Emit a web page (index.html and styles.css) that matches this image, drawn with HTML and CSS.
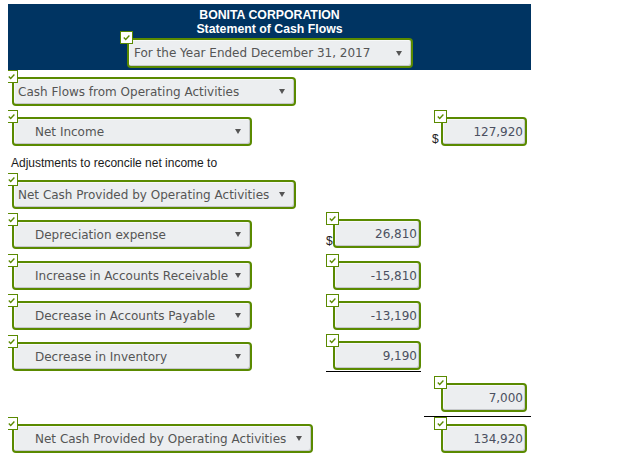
FILE: index.html
```html
<!DOCTYPE html>
<html>
<head>
<meta charset="utf-8">
<link rel="stylesheet" href="styles.css">
</head>
<body>
<div class="header">
  <div class="title">BONITA CORPORATION</div>
  <div class="title">Statement of Cash Flows</div>
  <div class="header-select">
    <div class="field sel sel-year">
      <span class="badge"><svg viewBox="0 0 11 11" width="11" height="11"><path d="M2.8 5.6 L4.7 7.4 L8.4 3.6" fill="none" stroke="#5a8a00" stroke-width="1.4"/></svg></span>
      <span class="sel-text">For the Year Ended December 31, 2017</span>
      <svg class="arrow" viewBox="0 0 6 5" width="6" height="5"><polygon points="0,0 6,0 3,5" fill="#555"/></svg>
    </div>
  </div>
</div>

<div class="sheet">
  <div class="row r1">
    <div class="c0">
      <div class="field sel w284">
        <span class="badge"><svg viewBox="0 0 11 11" width="11" height="11"><path d="M2.8 5.6 L4.7 7.4 L8.4 3.6" fill="none" stroke="#5a8a00" stroke-width="1.4"/></svg></span>
        <span class="sel-text">Cash Flows from Operating Activities</span>
        <svg class="arrow" viewBox="0 0 6 5" width="6" height="5"><polygon points="0,0 6,0 3,5" fill="#555"/></svg>
      </div>
    </div>
  </div>

  <div class="row r2">
    <div class="c0">
      <div class="field sel w240 indent">
        <span class="badge"><svg viewBox="0 0 11 11" width="11" height="11"><path d="M2.8 5.6 L4.7 7.4 L8.4 3.6" fill="none" stroke="#5a8a00" stroke-width="1.4"/></svg></span>
        <span class="sel-text">Net Income</span>
        <svg class="arrow" viewBox="0 0 6 5" width="6" height="5"><polygon points="0,0 6,0 3,5" fill="#555"/></svg>
      </div>
    </div>
    <div class="c1"></div>
    <div class="c2">
      <span class="dollar">$</span>
      <div class="field num w86">
        <span class="badge"><svg viewBox="0 0 11 11" width="11" height="11"><path d="M2.8 5.6 L4.7 7.4 L8.4 3.6" fill="none" stroke="#5a8a00" stroke-width="1.4"/></svg></span>
        127,920
      </div>
    </div>
  </div>

  <div class="label">Adjustments to reconcile net income to</div>

  <div class="row r3">
    <div class="c0">
      <div class="field sel w284">
        <span class="badge"><svg viewBox="0 0 11 11" width="11" height="11"><path d="M2.8 5.6 L4.7 7.4 L8.4 3.6" fill="none" stroke="#5a8a00" stroke-width="1.4"/></svg></span>
        <span class="sel-text">Net Cash Provided by Operating Activities</span>
        <svg class="arrow" viewBox="0 0 6 5" width="6" height="5"><polygon points="0,0 6,0 3,5" fill="#555"/></svg>
      </div>
    </div>
  </div>

  <div class="row r4">
    <div class="c0 shift">
      <div class="field sel w240 indent">
        <span class="badge"><svg viewBox="0 0 11 11" width="11" height="11"><path d="M2.8 5.6 L4.7 7.4 L8.4 3.6" fill="none" stroke="#5a8a00" stroke-width="1.4"/></svg></span>
        <span class="sel-text">Depreciation expense</span>
        <svg class="arrow" viewBox="0 0 6 5" width="6" height="5"><polygon points="0,0 6,0 3,5" fill="#555"/></svg>
      </div>
    </div>
    <div class="c1">
      <span class="dollar d1">$</span>
      <div class="field num w88">
        <span class="badge"><svg viewBox="0 0 11 11" width="11" height="11"><path d="M2.8 5.6 L4.7 7.4 L8.4 3.6" fill="none" stroke="#5a8a00" stroke-width="1.4"/></svg></span>
        26,810
      </div>
    </div>
  </div>

  <div class="row r5">
    <div class="c0">
      <div class="field sel w240 indent">
        <span class="badge"><svg viewBox="0 0 11 11" width="11" height="11"><path d="M2.8 5.6 L4.7 7.4 L8.4 3.6" fill="none" stroke="#5a8a00" stroke-width="1.4"/></svg></span>
        <span class="sel-text">Increase in Accounts Receivable</span>
        <svg class="arrow" viewBox="0 0 6 5" width="6" height="5"><polygon points="0,0 6,0 3,5" fill="#555"/></svg>
      </div>
    </div>
    <div class="c1">
      <span class="dollar d1"></span>
      <div class="field num w88">
        <span class="badge"><svg viewBox="0 0 11 11" width="11" height="11"><path d="M2.8 5.6 L4.7 7.4 L8.4 3.6" fill="none" stroke="#5a8a00" stroke-width="1.4"/></svg></span>
        -15,810
      </div>
    </div>
  </div>

  <div class="row r6">
    <div class="c0">
      <div class="field sel w240 indent">
        <span class="badge"><svg viewBox="0 0 11 11" width="11" height="11"><path d="M2.8 5.6 L4.7 7.4 L8.4 3.6" fill="none" stroke="#5a8a00" stroke-width="1.4"/></svg></span>
        <span class="sel-text">Decrease in Accounts Payable</span>
        <svg class="arrow" viewBox="0 0 6 5" width="6" height="5"><polygon points="0,0 6,0 3,5" fill="#555"/></svg>
      </div>
    </div>
    <div class="c1">
      <span class="dollar d1"></span>
      <div class="field num w88">
        <span class="badge"><svg viewBox="0 0 11 11" width="11" height="11"><path d="M2.8 5.6 L4.7 7.4 L8.4 3.6" fill="none" stroke="#5a8a00" stroke-width="1.4"/></svg></span>
        -13,190
      </div>
    </div>
  </div>

  <div class="row r7">
    <div class="c0 shift">
      <div class="field sel w240 indent">
        <span class="badge"><svg viewBox="0 0 11 11" width="11" height="11"><path d="M2.8 5.6 L4.7 7.4 L8.4 3.6" fill="none" stroke="#5a8a00" stroke-width="1.4"/></svg></span>
        <span class="sel-text">Decrease in Inventory</span>
        <svg class="arrow" viewBox="0 0 6 5" width="6" height="5"><polygon points="0,0 6,0 3,5" fill="#555"/></svg>
      </div>
    </div>
    <div class="c1 total">
      <span class="dollar d1"></span>
      <div class="field num w88">
        <span class="badge"><svg viewBox="0 0 11 11" width="11" height="11"><path d="M2.8 5.6 L4.7 7.4 L8.4 3.6" fill="none" stroke="#5a8a00" stroke-width="1.4"/></svg></span>
        9,190
      </div>
    </div>
  </div>

  <div class="row r8">
    <div class="c0"></div>
    <div class="c1"></div>
    <div class="c2 total2">
      <span class="dollar"></span>
      <div class="field num w86">
        <span class="badge"><svg viewBox="0 0 11 11" width="11" height="11"><path d="M2.8 5.6 L4.7 7.4 L8.4 3.6" fill="none" stroke="#5a8a00" stroke-width="1.4"/></svg></span>
        7,000
      </div>
    </div>
  </div>

  <div class="row r9">
    <div class="c0">
      <div class="field sel w301 indent">
        <span class="badge"><svg viewBox="0 0 11 11" width="11" height="11"><path d="M2.8 5.6 L4.7 7.4 L8.4 3.6" fill="none" stroke="#5a8a00" stroke-width="1.4"/></svg></span>
        <span class="sel-text">Net Cash Provided by Operating Activities</span>
        <svg class="arrow" viewBox="0 0 6 5" width="6" height="5"><polygon points="0,0 6,0 3,5" fill="#555"/></svg>
      </div>
    </div>
    <div class="c1"></div>
    <div class="c2">
      <span class="dollar"></span>
      <div class="field num w86">
        <span class="badge"><svg viewBox="0 0 11 11" width="11" height="11"><path d="M2.8 5.6 L4.7 7.4 L8.4 3.6" fill="none" stroke="#5a8a00" stroke-width="1.4"/></svg></span>
        134,920
      </div>
    </div>
  </div>
</div>
</body>
</html>
```

FILE: styles.css
```css
html, body {
  background: #ffffff;
}
body {
  margin: 4px 8px 0;
  font-family: "Liberation Sans", Arial, sans-serif;
  font-size: 12px;
  color: #1a1a1a;
}
.header {
  width: 523px;
  background: #003462;
  padding: 4px 0 2px;
  display: flex;
  flex-direction: column;
  align-items: center;
}
.title {
  color: #ffffff;
  font-weight: bold;
  font-size: 12.3px;
  line-height: 14px;
  height: 14px;
}
.header-select {
  margin-top: 2px;
  padding-left: 1px;
}
.sheet {
  padding-left: 4px;
  display: flex;
  flex-direction: column;
}
.row {
  display: grid;
  grid-template-columns: 314px 95px 110px;
  column-gap: 0;
  align-items: start;
  margin-top: 11px;
}
.r1 { margin-top: 7px; }
.r3 { margin-top: 10px; }
.r4 { margin-top: 10px; }
.r5 { margin-top: 12px; }
.r7 { margin-top: 11px; }
.r8 { margin-top: 11px; }
.r9 { margin-top: 7px; }
.label {
  margin-top: 10px;
  line-height: 14px;
  height: 14px;
  margin-left: -1px;
  color: #1a1a1a;
}
.c0.shift { padding-top: 1px; }
.c1, .c2 {
  display: flex;
  align-items: flex-end;
}
.c2 {
  margin-left: 3px;
  padding-left: 8px;
}
.c1.total {
  padding-bottom: 1px;
  border-bottom: 1px solid #000000;
}
.c2.total2 {
  padding-bottom: 4px;
  border-bottom: 1px solid #000000;
}
.dollar {
  width: 9px;
  flex: none;
  font-size: 12px;
  line-height: 12px;
  color: #222;
  margin-bottom: 1px;
}
.dollar.d1 { width: 7px; }
.field {
  position: relative;
  box-sizing: border-box;
  height: 29px;
  border: 2px solid #5a8a00;
  border-radius: 4px;
  background: #eceef0;
  box-shadow: inset -1px -1px 0 #c6c8cb, inset 1px 1px 0 #f7f8f9;
  font-family: "DejaVu Sans", Verdana, sans-serif;
  font-size: 12px;
  display: flex;
  align-items: center;
}
.sel {
  color: #555555;
  padding: 0 9px 0 4px;
}
.sel.indent { padding-left: 21px; }
.sel-year {
  width: 286px;
  height: 30px;
  padding-left: 5px;
}
.sel-text {
  flex: 1;
  white-space: nowrap;
}
.arrow { flex: none; }
.w284 { width: 284px; }
.w240 { width: 240px; }
.w301 { width: 301px; }
.w88 { width: 88px; }
.w86 { width: 86px; }
.num {
  justify-content: flex-end;
  padding-right: 2px;
  color: #4b5060;
}
.badge {
  position: absolute;
  left: -9px;
  top: -9px;
  width: 13px;
  height: 13px;
  box-sizing: border-box;
  border: 1px solid #5a8a00;
  background: #ffffff;
  display: flex;
  align-items: center;
  justify-content: center;
}
.badge svg { display: block; }
```
